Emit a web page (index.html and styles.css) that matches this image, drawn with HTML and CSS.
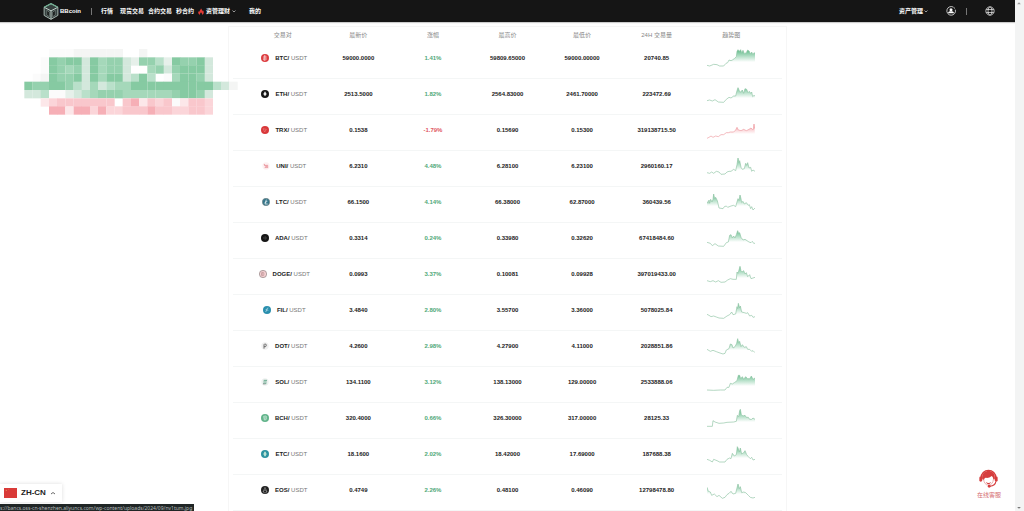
FILE: index.html
```html
<!DOCTYPE html>
<html lang="zh-CN">
<head>
<meta charset="utf-8">
<title>BBcoin</title>
<link rel="stylesheet" href="styles.css">
</head>
<body>
<div class="page">
  <header class="topbar">
    <a class="brand" href="#">
      <svg class="brand-mark" viewBox="0 0 48 52" aria-hidden="true">
        <path d="M24 2 45 13v25L24 50 3 38V13z" fill="#36413f" stroke="#a9b9b3" stroke-width="3"/>
        <path d="M3 13 24 24 45 13M24 24v26" fill="none" stroke="#c2d0ca" stroke-width="3"/>
        <path d="M3 13 24 2 45 13" fill="none" stroke="#6fae91" stroke-width="4"/>
        <path d="M11 22v15l8 5V28zM37 22v15l-8 5V28z" fill="#161a19" stroke="#7f8c88" stroke-width="2"/>
      </svg>
      <span>BBcoin</span>
    </a>
    <span class="divider"></span>
    <nav class="menu">
      <a href="#">行情</a>
      <a href="#">现货交易</a>
      <a href="#">合约交易</a>
      <a href="#">秒合约</a>
      <a class="hot" href="#">
        <svg class="flame" viewBox="0 0 18 20" aria-hidden="true"><path d="M9 0c1 4 5 5 5 9l2-2c3 7 0 12-4 13 1-4-1-5-3-8-1 3-4 4-3 8C1 18-1 13 2 9l2 2C4 6 9 5 9 0z" fill="#e33b36"/></svg>
        资管理财
        <svg class="caret" viewBox="0 0 8 6" aria-hidden="true"><path d="M1 1l3 3 3-3" fill="none" stroke="#bbb" stroke-width="1.6"/></svg>
      </a>
      <a class="mine" href="#">我的</a>
    </nav>
    <div class="account">
      <a class="assets" href="#">资产管理
        <svg class="caret" viewBox="0 0 8 6" aria-hidden="true"><path d="M1 1l3 3 3-3" fill="none" stroke="#bbb" stroke-width="1.6"/></svg>
      </a>
      <button class="icon-button" type="button" aria-label="账户">
        <svg viewBox="0 0 30 30"><path d="M23 4A13 13 0 1 0 28 11" fill="none" stroke="#e8e8e8" stroke-width="2.4"/><circle cx="25.500" cy="6" r="1.600" fill="#e8e8e8"/><circle cx="15" cy="11.500" r="4.500" fill="#fff"/><path d="M6 22c1-6 5-6 9-6s8 0 9 6z" fill="#fff"/></svg>
      </button>
      <span class="divider"></span>
      <button class="icon-button" type="button" aria-label="语言">
        <svg viewBox="0 0 30 30" fill="none" stroke="#e8e8e8" stroke-width="2.2"><circle cx="15" cy="15" r="12.500"/><ellipse cx="15" cy="15" rx="6" ry="12.500"/><path d="M3.500 10.500h23M3.500 19.500h23"/></svg>
      </button>
    </div>
  </header>

  <main class="market">
    <table class="quotes">
      <thead>
        <tr><th>交易对</th><th>最新价</th><th>涨幅</th><th>最高价</th><th>最低价</th><th>24H 交易量</th><th>趋势图</th></tr>
      </thead>
      <tbody id="quotes"></tbody>
    </table>
  </main>
</div>

<div class="scrollbar" aria-hidden="true">
  <svg viewBox="0 0 8 8"><path d="M1.500 5.500 4 3l2.500 2.500z" fill="#999"/></svg>
  <svg viewBox="0 0 8 8"><path d="M1.500 2.500 4 5l2.500-2.500z" fill="#777"/></svg>
</div>

<svg class="mosaic" id="mosaic" viewBox="0 0 640 198" aria-hidden="true"></svg>

<button class="language" type="button">
  <svg class="flag" viewBox="0 0 39 30" aria-hidden="true"><path d="M0 0h39v30H0z" fill="#d93a38"/><circle cx="7" cy="7" r="2" fill="#e98a58"/><circle cx="14" cy="4" r="1" fill="#e98a58"/></svg>
  ZH-CN
  <svg class="language-caret" viewBox="0 0 12 8" aria-hidden="true"><path d="M2 6l4-3 4 3" fill="none" stroke="#444" stroke-width="1.6"/></svg>
</button>

<a class="service" href="#">
  <svg viewBox="0 0 54 54" aria-hidden="true">
    <path d="M6 25a21 21 0 0 1 42 0" fill="none" stroke="#d63d3d" stroke-width="4"/>
    <path d="M9 29C7 12 17 6 27 6s20 6 18 23l-4 1c-1-6-3-9-5-10-5 5-12 6-17 5-3 1-4 3-5 6z" fill="#d63d3d"/>
    <rect x="1" y="21" width="8" height="15" rx="4" fill="#d63d3d"/><rect x="45" y="21" width="8" height="15" rx="4" fill="#d63d3d"/>
    <path d="M13 29c1 10 6 17 14 17s13-7 14-17" fill="none" stroke="#e58b8b" stroke-width="2"/>
    <path d="M48 35c-1 8-7 13-17 14" fill="none" stroke="#d63d3d" stroke-width="3"/>
    <path d="M20 37c4 4 10 4 14 0-2 8-12 8-14 0z" fill="#d63d3d"/><circle cx="29" cy="49" r="4" fill="#d63d3d"/>
  </svg>
  <span>在线客服</span>
</a>

<div class="statusbar">s://bancs.oss-cn-shenzhen.aliyuncs.com/wp-content/uploads/2024/09/nv1tum.jpg</div>
<script src="app.js"></script>
</body>
</html>
```

FILE: styles.css
```css
* {
  box-sizing: border-box;
}

body {
  margin: 0;
  display: flex;
  overflow: hidden;
  height: 100vh;
  background: #fff;
  color: #222;
  font: 6px/8px "Liberation Sans", "Noto Sans CJK SC", sans-serif;
}

a {
  color: inherit;
  text-decoration: none;
}

svg {
  display: block;
  flex: none;
}

button {
  margin: 0;
  padding: 0;
  border: 0;
  background: none;
  color: inherit;
  font: inherit;
}

.page {
  flex: 1;
  min-width: 0;
}

.topbar {
  display: flex;
  align-items: center;
  height: 22px;
  padding: 0 20px 0 43px;
  background: #151515;
  color: #fff;
  font-weight: 700;
  box-shadow: 0 1px 1px #ccc;
}

.brand {
  display: flex;
  align-items: center;
  gap: 1px;
  width: 48px;
}

.brand-mark {
  width: 16px;
  height: 17px;
}

.divider {
  width: 1px;
  height: 7px;
  background: #777;
}

.menu {
  display: flex;
  gap: 4px;
  margin-left: 9px;
}

.menu a:first-child {
  margin-right: 3px;
}

.hot,
.assets {
  display: flex;
  align-items: center;
  gap: 2px;
}

.flame {
  width: 6px;
  height: 7px;
}

.caret {
  width: 4px;
  height: 3px;
}

.mine {
  margin-left: 9px;
}

.account {
  display: flex;
  align-items: center;
  margin-left: auto;
}

.icon-button {
  width: 10px;
  height: 10px;
  margin-left: 18px;
}

.assets {
  gap: 1px;
}

.account .divider {
  margin-left: 10px;
}

.market {
  width: 55%;
  margin: 4px auto 0;
  padding: 0 4px;
  border: 1px solid #f6f6f6;
}

.quotes {
  width: 100%;
  border-collapse: separate;
  border-spacing: 0;
  table-layout: fixed;
  text-align: center;
}

.quotes th {
  height: 16px;
  padding: 0;
  color: #888;
  font-weight: 400;
}

.quotes th:first-child,
.quotes th:last-child {
  width: 16%;
}

.quotes th:first-child,
.quotes td:first-child {
  padding-left: 11px;
}

.quotes th:last-child,
.quotes td:last-child {
  padding-right: 13px;
}

.quotes td {
  height: 36px;
  padding: 5px 0 10px;
  border-bottom: 1px solid #f4f6f6;
  font-weight: 700;
}

.pair {
  display: flex;
  align-items: center;
  justify-content: center;
  gap: 6px;
  padding-left: 3px;
}

.pair small {
  color: #777;
  font-size: 6px;
  font-weight: 400;
}

.coin {
  width: 8px;
  height: 8px;
}

.quotes .up {
  color: #4fa878;
}

.quotes .down {
  color: #e0585f;
}

.trend {
  width: 48px;
  height: 20px;
  margin: 0 auto;
}

.scrollbar {
  display: flex;
  flex-direction: column;
  justify-content: space-between;
  width: 9px;
  background: #f3f4f4;
}

.scrollbar svg {
  width: 8px;
  height: 6px;
}

.mosaic {
  position: absolute;
  left: 24px;
  top: 49px;
  width: 214px;
  height: 66px;
}

.language {
  position: absolute;
  left: 0;
  bottom: 9px;
  display: flex;
  align-items: center;
  gap: 4px;
  padding: 0 6px 0 4px;
  height: 18px;
  background: #fff;
  box-shadow: 0 0 4px #ddd;
  font: 700 8px/18px "Liberation Sans", sans-serif;
}

.flag {
  width: 13px;
  height: 10px;
}

.language-caret {
  width: 6px;
  height: 4px;
}

.service {
  position: absolute;
  right: 23px;
  bottom: 12px;
  display: flex;
  flex-direction: column;
  align-items: center;
  gap: 3px;
  color: #d46a70;
}

.service svg {
  width: 19px;
  height: 19px;
}

.statusbar {
  position: absolute;
  left: 0;
  bottom: 0;
  height: 7px;
  padding-right: 2px;
  overflow: hidden;
  background: #202626;
  color: #b5bcbc;
  font: 5px/8px "Noto Sans", sans-serif;
  white-space: nowrap;
}
```

FILE: app.js
```js
const icons = {
  BTC: '<circle cx="12" cy="12" r="12" fill="#dc3d40"/><path d="M9 6h5q3 3 0 6 4 3 0 6H8zM11 4v16M10 12h4" fill="none" stroke="#fbdcdc" stroke-width="2"/>',
  ETH: '<circle cx="12" cy="12" r="12" fill="#161616"/><path d="M12 4l5 8-5 7-5-7z" fill="#eee"/>',
  TRX: '<circle cx="12" cy="12" r="12" fill="#d9383a"/><path d="M6 8l10 2-5 8z" fill="none" stroke="#ef8f8f" stroke-width="1.500"/>',
  UNI: '<circle cx="12" cy="12" r="11" fill="#fdf1f2"/><path d="M6 6l5 4 6-1 1 8H8l5-4-5-1z" fill="#f2adb3" stroke="#dd7780"/>',
  LTC: '<circle cx="12" cy="12" r="11" fill="#34758a" stroke="#7a898c" stroke-width="2"/><path d="M13 5l-4 13h8M8 14l8-4" fill="none" stroke="#e4f0f2" stroke-width="2.500"/>',
  ADA: '<circle cx="12" cy="12" r="12" fill="#161616"/><circle cx="12" cy="12" r="3.500" fill="none" stroke="#777" stroke-width="2" stroke-dasharray="2 1"/>',
  DOGE: '<circle cx="12" cy="12" r="11" fill="#f4cfd1" stroke="#8f8383" stroke-width="2"/><path d="M8 7h5q4 5 0 10H8l1-10M6 12h6" fill="none" stroke="#a7787c" stroke-width="1.500"/>',
  FIL: '<circle cx="12" cy="12" r="12" fill="#2a8fae"/><path d="M16 6q-4-1-5 6l-3 6M8 11l8 2" fill="none" stroke="#c4e6ee" stroke-width="2"/>',
  DOT: '<circle cx="12" cy="12" r="11" fill="#f0f0f0"/><path d="M9 20V8q1-3 5-2 4 3 0 8H9" fill="none" stroke="#555" stroke-width="2.500"/>',
  SOL: '<circle cx="12" cy="12" r="11" fill="#eef1f0"/><path d="M8 7h10M7 12h10M6 17h10" stroke="#65a98c" stroke-width="3"/><path d="M6 18h7" stroke="#b99cae" stroke-width="2"/>',
  BCH: '<circle cx="12" cy="12" r="12" fill="#62b48b"/><path d="M8 7l7-1q3 3 0 6 4 3 0 5l-5 1zM9 12h6" fill="none" stroke="#e1f3e9" stroke-width="2"/>',
  ETC: '<circle cx="12" cy="12" r="12" fill="#2d93a0"/><path d="M12 4l5 8-5 8-5-8z" fill="#d8f2df"/><path d="M7 12h10" stroke="#2d93a0"/>',
  EOS: '<circle cx="12" cy="12" r="12" fill="#222"/><path d="M12 4l6 14-6 3-6-3zM6 18l6-7 6 7" fill="none" stroke="#aaa" stroke-width="1.500"/>'
};

const quotes = [
  ['BTC', '59000.0000', '1.41%', '59809.65000', '59000.00000', '20740.85', '0,52 8,54 20,49 30,50 38,54 50,54 57,46 62,44 66,36 72,38 76,36 82,32 88,26 90,10 93,5 97,10 101,5 104,14 108,7 112,17 118,14 122,6 127,10 130,18 134,12 138,20 141,14 144,16'],
  ['ETH', '2513.5000', '1.82%', '2564.83000', '2461.70000', '223472.69', '0,50 8,48 16,51 24,47 34,54 50,55 58,46 66,40 72,42 80,36 86,36 90,20 93,11 97,20 100,25 106,18 110,28 114,14 119,16 123,26 127,22 131,28 134,24 137,38 141,34 144,36'],
  ['TRX', '0.1538', '-1.79%', '0.15690', '0.15300', '319138715.50', '0,55 6,52 12,48 18,52 26,48 34,50 42,44 50,44 58,38 64,38 70,36 80,36 86,30 90,22 94,30 102,32 110,28 118,32 126,28 132,24 136,28 139,28 141,12 143,26'],
  ['UNI', '6.2310', '4.48%', '6.28100', '6.23100', '2960160.17', '0,50 8,52 14,48 20,52 28,46 36,48 42,55 54,54 60,48 66,46 72,46 80,40 86,44 90,26 93,6 96,20 98,14 102,34 106,40 112,38 116,22 119,28 122,20 126,36 131,34 134,46 138,42 144,46'],
  ['LTC', '66.1500', '4.14%', '66.38000', '62.87000', '360439.56', '0,28 3,34 6,24 8,34 11,22 15,30 18,22 20,6 23,20 26,16 31,26 36,48 48,50 52,44 58,42 62,46 72,42 80,40 86,44 90,30 93,20 96,26 99,9 102,20 104,32 108,28 112,36 118,32 124,40 127,38 131,50 134,44 138,54 144,48'],
  ['ADA', '0.3314', '0.24%', '0.33980', '0.32620', '67418484.60', '0,43 10,46 16,53 24,47 34,54 50,55 58,44 64,42 68,22 72,20 76,30 80,24 84,30 88,20 92,8 95,16 98,14 102,28 108,36 114,34 120,38 126,42 132,44 136,40 140,46 144,46'],
  ['DOGE', '0.0993', '3.37%', '0.10081', '0.09928', '397019433.00', '0,50 10,53 18,50 26,54 34,50 42,55 54,54 62,48 70,44 78,46 88,46 90,24 93,28 96,18 99,7 102,20 105,24 110,20 114,30 118,26 122,38 128,32 132,44 138,42 144,40'],
  ['FIL', '3.4840', '2.80%', '3.55700', '3.36000', '5078025.84', '0,43 6,46 12,50 20,48 28,51 36,54 50,55 60,48 68,44 74,36 78,44 86,42 90,20 92,26 94,10 98,24 100,18 104,36 112,38 118,40 122,38 128,48 134,46 138,52 144,50'],
  ['DOT', '4.2600', '2.98%', '4.27900', '4.11000', '2028851.86', '0,40 10,46 18,43 28,47 36,50 48,54 54,52 58,42 66,38 70,24 75,26 78,36 84,32 89,22 92,8 95,20 98,16 102,32 106,26 112,34 118,32 122,40 128,40 134,46 138,44 144,50'],
  ['SOL', '134.1100', '3.12%', '138.13000', '129.00000', '2533888.06', '0,54 20,55 40,54 54,54 60,46 66,46 70,34 76,36 82,32 90,26 94,10 98,10 101,20 106,14 110,22 116,14 122,20 128,20 133,12 138,22 144,18'],
  ['BCH', '320.4000', '0.66%', '326.30000', '317.00000', '28125.33', '0,55 16,55 18,38 24,42 36,46 50,45 60,43 80,42 88,40 91,22 95,26 98,8 100,4 103,20 108,24 114,22 118,28 124,28 128,34 134,34 138,30 144,34'],
  ['ETC', '18.1600', '2.02%', '18.42000', '17.69000', '187688.38', '0,46 8,49 16,54 20,46 30,50 38,54 54,54 60,46 68,42 72,44 76,28 82,36 88,32 91,8 94,14 97,24 100,12 104,30 110,26 114,20 119,32 124,38 130,44 134,40 138,48 144,46'],
  ['EOS', '0.4749', '2.26%', '0.48100', '0.46090', '12798478.80', '0,22 4,34 10,36 14,46 22,42 30,50 36,46 46,55 54,52 60,44 66,40 72,34 78,42 86,40 90,24 93,12 97,26 100,20 104,38 110,36 116,38 124,46 130,52 138,54 144,52']
];

document.getElementById('quotes').innerHTML = quotes.map(([coin, last, change, high, low, volume, points]) => {
  const down = change.startsWith('-');
  const fill = down ? '#f27f88' : '#58b883';
  const line = down ? '#ee9ba1' : '#8fc4a5';
  return `<tr>
    <td><div class="pair"><svg class="coin" viewBox="0 0 24 24" aria-hidden="true">${icons[coin]}</svg><span>${coin}/ <small>USDT</small></span></div></td>
    <td>${last}</td><td class="${down ? 'down' : 'up'}">${change}</td><td>${high}</td><td>${low}</td><td>${volume}</td>
    <td><svg class="trend" viewBox="0 0 144 60" aria-hidden="true">
      <linearGradient id="fade-${coin}" gradientUnits="userSpaceOnUse" x1="0" y1="4" x2="0" y2="42"><stop stop-color="${fill}"/><stop offset="1" stop-color="${fill}" stop-opacity="0"/></linearGradient>
      <polygon points="0,60 ${points} 144,60" fill="url(#fade-${coin})"/>
      <polyline points="${points}" fill="none" stroke="${line}" stroke-width="2"/>
    </svg></td></tr>`;
}).join('');

const shades = {
  A: '#86caa2', B: '#95d1ae', C: '#a5d8ba', D: '#b9e0ca', E: '#d3e8dc', F: '#e6f0ea', g: '#f4f5f4', h: '#fbfbfb',
  P: '#f6afb6', Q: '#f9c7cc', R: '#fbd5d9', S: '#fce7e9'
};
const cells = [
  '...hhhgggggg..g.......',
  '..hABAAEACBBEFBBDFABBAE',
  '..hABCBEACBBE..CBEBAAAE',
  '.hgABBAEACAAEDAD.hCAABE',
  'ABBAABDECEDCCAAAAAAAAAADEg',
  'EEDhhFEDCBBBCCCCCCBAABE',
  '..SRQQQQQQQ.QPSQRQhSQQR',
  '...PPSPPRPRRQQQPQQRRQQR'
];
document.getElementById('mosaic').innerHTML = cells.map((row, y) =>
  [...row].map((key, x) => {
    if (!shades[key]) return '';
    return `<rect x="${Math.round(x * 24.6)}" y="${Math.round(y * 24.6)}" width="25" height="25" fill="${shades[key]}"/>`;
  }).join('')).join('');
```
